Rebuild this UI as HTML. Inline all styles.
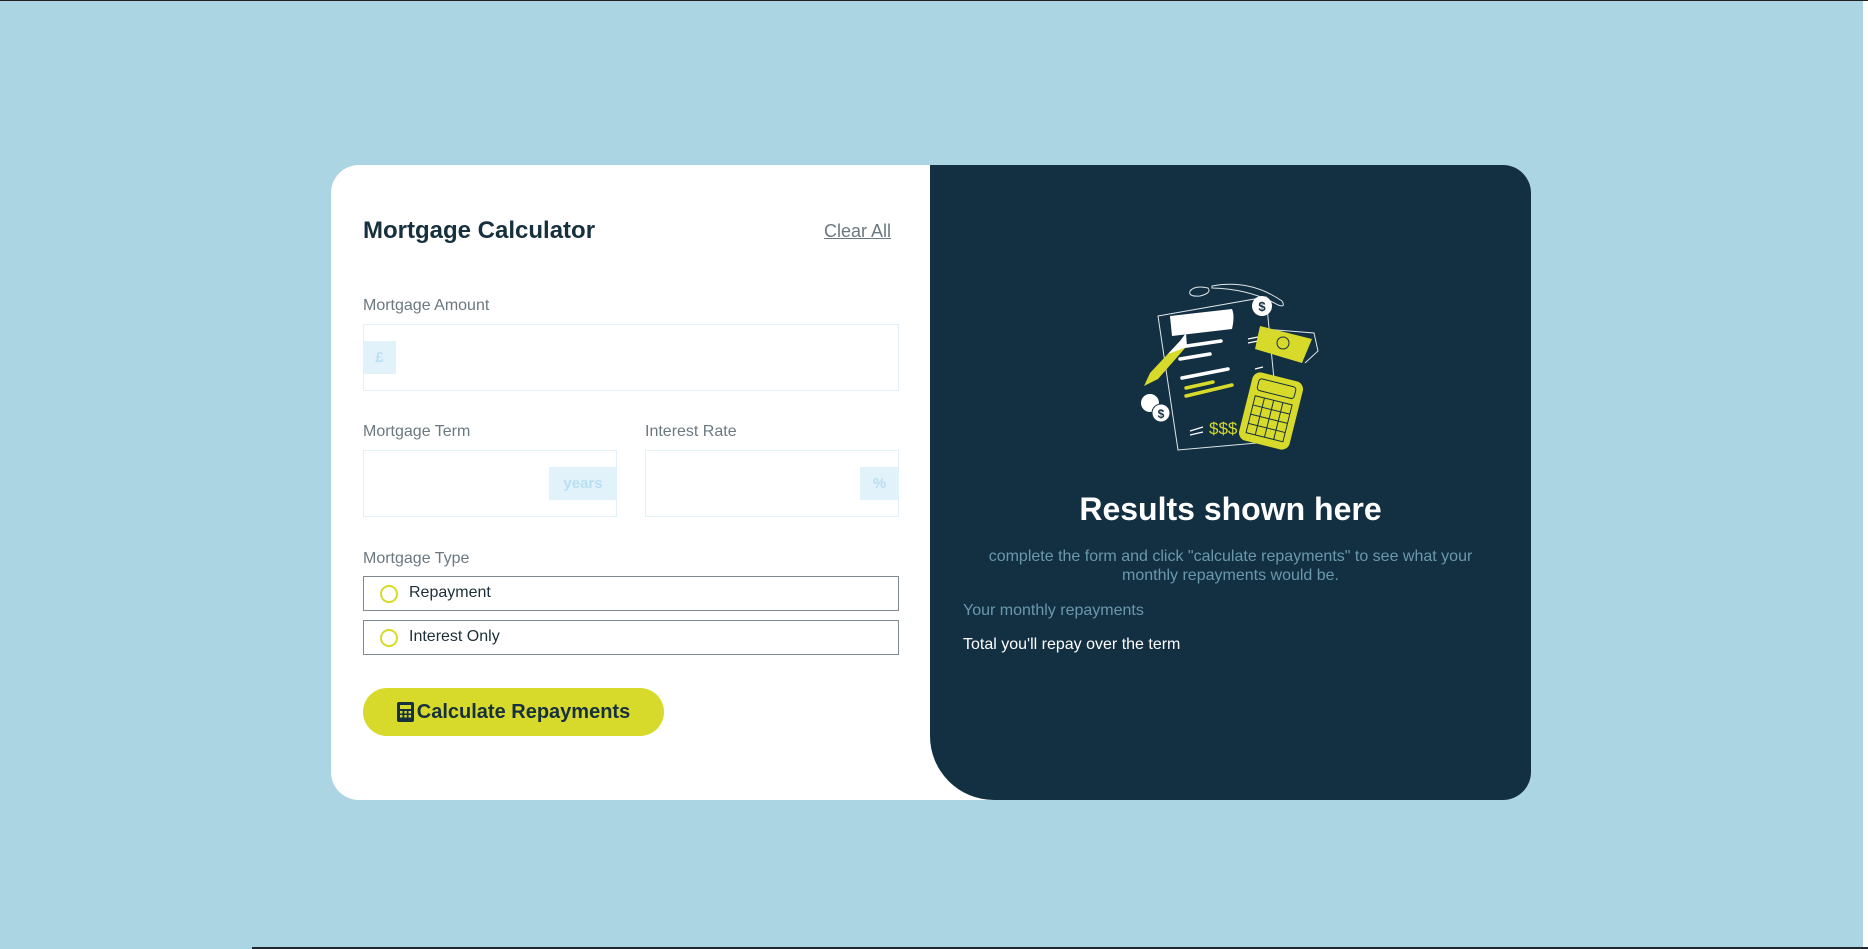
<!DOCTYPE html>
<html><head><meta charset="utf-8"><style>
*{margin:0;padding:0;box-sizing:border-box}
html,body{width:1868px;height:949px;overflow:hidden}
body{background:#abd5e2;font-family:"Liberation Sans",Arial,sans-serif;position:relative;border-top:1px solid #222}
.abs{position:absolute}
.card{left:331px;top:164px;width:1200px;height:635px;background:#fff;border-radius:28px;overflow:hidden}
.right{left:599px;top:0;width:601px;height:635px;background:#133042;border-radius:0 0 0 64px}
.lbl{color:#6b7880;font-size:16px;position:absolute;left:32px}
.inp{position:absolute;border:1px solid #e2f0f8;background:#fff}
.tag{position:absolute;background:#e2f2fb;color:#b9dff3;font-weight:bold;font-size:15px;display:flex;align-items:center;justify-content:center}
.radio{position:absolute;left:32px;width:536px;height:35px;border:1.5px solid #7f8a90;font-size:16px;color:#1c2e38}
.radio i{position:absolute;left:16px;top:8px;width:18px;height:18px;border:2px solid #d7da2a;border-radius:50%}
.radio span{position:absolute;left:45px;top:7px}
</style></head><body>
<div class="abs" style="right:0;top:0;width:5px;height:949px;background:#fff"></div>
<div class="abs" style="left:252px;bottom:0;width:1616px;height:2px;background:#1f2a30"></div>
<div class="abs card">
  <div class="abs" style="left:32px;top:52px;font-size:24px;font-weight:bold;color:#17303d">Mortgage Calculator</div>
  <div class="abs" style="left:491px;top:56px;width:69px;text-align:right;font-size:18px;color:#6b7880;text-decoration:underline">Clear All</div>
  <div class="lbl" style="top:132px">Mortgage Amount</div>
  <div class="inp" style="left:32px;top:159px;width:536px;height:67px"></div>
  <div class="tag" style="left:32px;top:176px;width:33px;height:33px">£</div>
  <div class="lbl" style="top:258px">Mortgage Term</div>
  <div class="lbl" style="top:258px;left:314px">Interest Rate</div>
  <div class="inp" style="left:32px;top:285px;width:254px;height:67px"></div>
  <div class="tag" style="left:218px;top:302px;width:68px;height:33px">years</div>
  <div class="inp" style="left:314px;top:285px;width:254px;height:67px"></div>
  <div class="tag" style="left:529px;top:302px;width:39px;height:33px">%</div>
  <div class="lbl" style="top:385px">Mortgage Type</div>
  <div class="radio" style="top:411px"><i></i><span>Repayment</span></div>
  <div class="radio" style="top:455px"><i></i><span>Interest Only</span></div>
  <div class="abs" style="left:32px;top:523px;width:301px;height:48px;border-radius:24px;background:#d7da2a;color:#17303d;font-weight:bold;font-size:20px;display:flex;align-items:center;justify-content:center;gap:3px">
    <svg width="17" height="20" viewBox="0 0 17 20"><rect x="0" y="0" width="17" height="20" rx="2" fill="#17303d"/><rect x="3" y="3" width="11" height="4" fill="#d7da2a"/><g fill="#d7da2a"><rect x="3" y="9" width="2.5" height="2.5"/><rect x="7.3" y="9" width="2.5" height="2.5"/><rect x="11.5" y="9" width="2.5" height="2.5"/><rect x="3" y="13" width="2.5" height="2.5"/><rect x="7.3" y="13" width="2.5" height="2.5"/><rect x="11.5" y="13" width="2.5" height="2.5"/></g></svg>
    Calculate Repayments</div>
  <div class="abs right">
    <svg class="abs" style="left:170px;top:96px" width="260" height="200" viewBox="0 0 260 200">
      <g fill="none" stroke="#dfe6ea" stroke-width="1">
        <path d="M58 55 L166 36 L180 180 L78 189 Z"/>
        <path d="M90 30 Q95 24 108 27 Q112 32 100 35 Q88 36 90 30Z"/>
        <path d="M112 25 Q150 18 182 40 Q186 47 178 44 Q150 28 112 27Z"/>
        <path d="M164 68 L214 72 L218 90 L205 102"/>
      </g>
      <path d="M70 55 L132 48 Q135 55 132 68 L72 75 Z" fill="#fff"/>
      <g stroke="#fff" stroke-width="3.5" stroke-linecap="round"><line x1="80" y1="86" x2="121" y2="80"/><line x1="80" y1="98" x2="110" y2="93"/><line x1="82" y1="117" x2="128" y2="108"/></g>
      <g stroke="#d7da2a" stroke-width="3.5" stroke-linecap="round"><line x1="86" y1="127" x2="113" y2="121"/><line x1="86" y1="135" x2="132" y2="124"/></g>
      <g stroke="#fff" stroke-width="1.2"><line x1="148" y1="78" x2="158" y2="76"/><line x1="148" y1="82" x2="158" y2="80"/><line x1="155" y1="108" x2="163" y2="106"/><line x1="90" y1="170" x2="103" y2="166"/><line x1="90" y1="174" x2="103" y2="171"/></g>
      <path d="M44 125 L50 112 L80 80 L86 86 L58 118 Z" fill="#d7da2a"/>
      <path d="M68 93 L80 80 L86 72 L87 86 Z" fill="#fff"/>
      <rect x="145" y="115" width="52" height="70" rx="8" transform="rotate(14 171 150)" fill="#d7da2a"/>
      <g stroke="#133042" stroke-width="1" fill="none" transform="rotate(14 171 150)"><rect x="152" y="121" width="38" height="12" rx="3"/><rect x="152" y="139" width="38" height="38"/><line x1="161.5" y1="139" x2="161.5" y2="177"/><line x1="171" y1="139" x2="171" y2="177"/><line x1="180.5" y1="139" x2="180.5" y2="177"/><line x1="152" y1="148.5" x2="190" y2="148.5"/><line x1="152" y1="158" x2="190" y2="158"/><line x1="152" y1="167.5" x2="190" y2="167.5"/></g>
      <path d="M160 65 L212 78 L202 102 L155 88 Z" fill="#d7da2a"/>
      <circle cx="183" cy="82" r="6" fill="none" stroke="#133042"/>
      <circle cx="162" cy="45" r="10" fill="#fff"/><text x="162" y="50" font-size="13" font-weight="bold" text-anchor="middle" fill="#133042" font-family="Liberation Sans">$</text>
      <circle cx="50" cy="142" r="9" fill="#fff"/><circle cx="61" cy="152" r="9" fill="#fff" stroke="#133042"/>
      <text x="61" y="157" font-size="12" font-weight="bold" text-anchor="middle" fill="#133042" font-family="Liberation Sans">$</text>
      <text x="109" y="173" font-size="17" fill="#d7da2a" font-family="Liberation Sans">$$$</text>
    </svg>
    <div class="abs" style="left:0;width:601px;top:326px;text-align:center;color:#fff;font-weight:bold;font-size:32px">Results shown here</div>
    <div class="abs" style="left:55px;width:491px;top:382px;text-align:center;color:#6a98ad;font-size:16px;line-height:19px">complete the form and click "calculate repayments" to see what your monthly repayments would be.</div>
    <div class="abs" style="left:33px;top:437px;color:#6a98ad;font-size:16px">Your monthly repayments</div>
    <div class="abs" style="left:33px;top:471px;color:#fff;font-size:16px">Total you'll repay over the term</div>
  </div>
</div>
</body></html>
